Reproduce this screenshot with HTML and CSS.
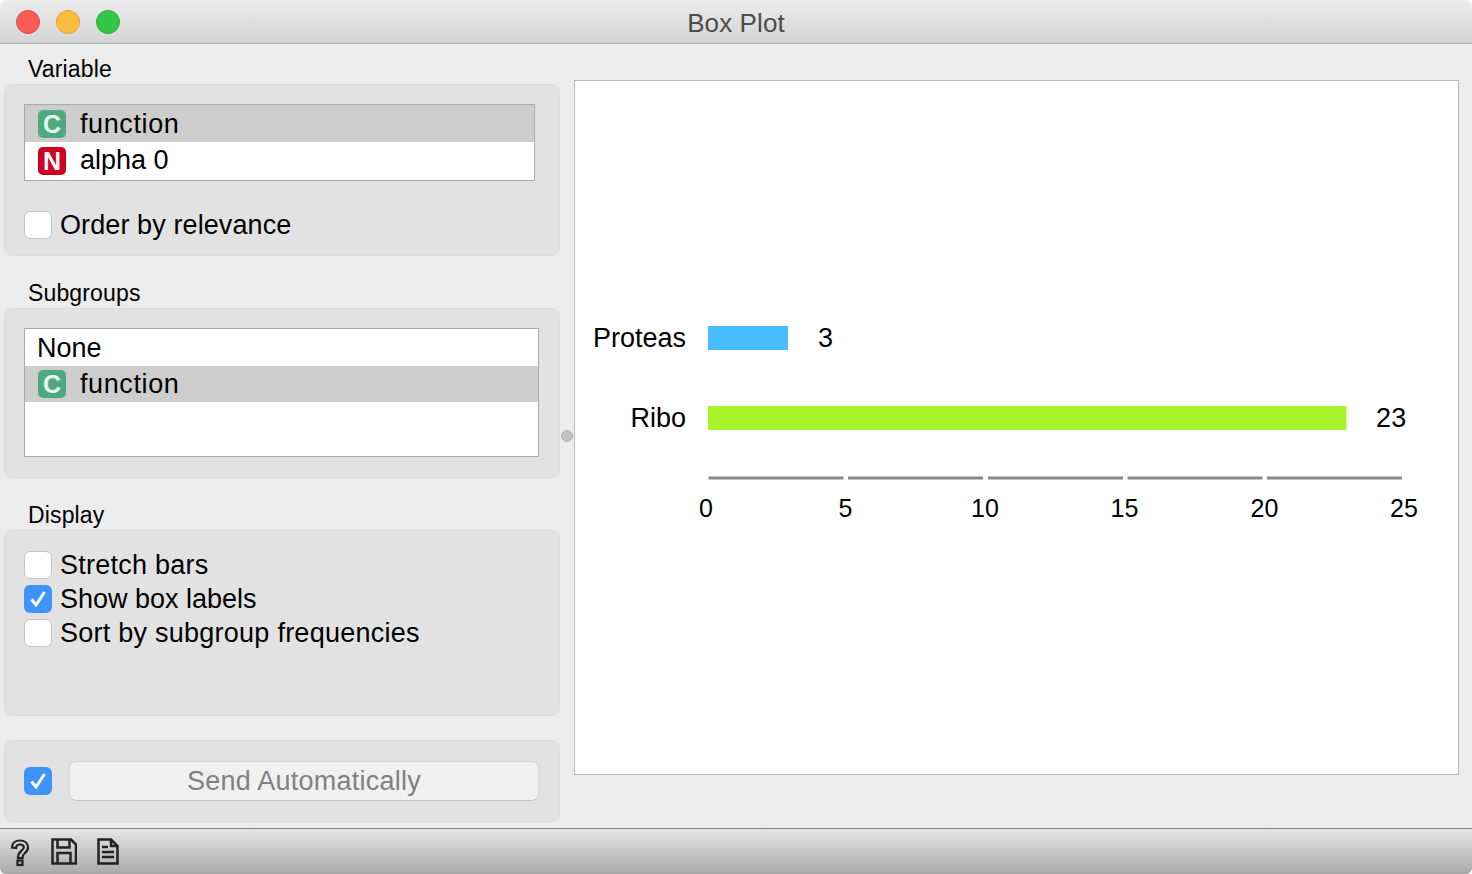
FILE: index.html
```html
<!DOCTYPE html>
<html lang="en">
<head>
    <meta charset="UTF-8">
    <title>Box Plot</title>
    <link rel="stylesheet" href="styles.css">
</head>
<body>
    <div class="window">
        <header class="titlebar">
            <div class="lights">
                <span class="light light-close"></span>
                <span class="light light-min"></span>
                <span class="light light-max"></span>
            </div>
            <div class="title">Box Plot</div>
        </header>

        <main class="main">
            <aside class="controls">
                <section class="group">
                    <div class="group-label">Variable</div>
                    <div class="group-box box-variable">
                        <div class="list list-variable">
                            <div class="row selected"><span class="badge badge-c">C</span><span class="row-text">function</span></div>
                            <div class="row"><span class="badge badge-n">N</span><span class="row-text">alpha 0</span></div>
                        </div>
                        <label class="check check-relevance"><span class="tick"></span>Order by relevance</label>
                    </div>
                </section>

                <section class="group">
                    <div class="group-label">Subgroups</div>
                    <div class="group-box box-subgroups">
                        <div class="list list-subgroups">
                            <div class="row row-plain"><span class="row-text">None</span></div>
                            <div class="row selected"><span class="badge badge-c">C</span><span class="row-text">function</span></div>
                        </div>
                    </div>
                </section>

                <section class="group">
                    <div class="group-label">Display</div>
                    <div class="group-box box-display">
                        <label class="check"><span class="tick"></span>Stretch bars</label>
                        <label class="check check-tight"><span class="tick on"><svg viewBox="0 0 28 28"><path d="M7.5 14.500l4.500 5.500 8.500-13"/></svg></span>Show box labels</label>
                        <label class="check"><span class="tick"></span>Sort by subgroup frequencies</label>
                    </div>
                </section>

                <section class="group-box box-send">
                    <span class="tick on"><svg viewBox="0 0 28 28"><path d="M7.5 14.500l4.500 5.500 8.500-13"/></svg></span>
                    <button class="send" disabled>Send Automatically</button>
                </section>
            </aside>

            <div class="handle"></div>

            <div class="chart">
                <svg class="plot" viewBox="575 81 883 693" width="883" height="693">
                    <text class="name" x="686" y="347">Proteas</text>
                    <rect x="708" y="326" width="80" height="24" fill="#46bdfe"/>
                    <text class="value" x="818" y="347">3</text>

                    <text class="name" x="686" y="427">Ribo</text>
                    <rect x="708" y="406" width="638.500" height="24" fill="#a8f52c"/>
                    <text class="value" x="1376" y="427">23</text>

                    <g fill="#888">
                        <rect x="708.500" y="476.500" width="135" height="3"/>
                        <rect x="848" y="476.500" width="135" height="3"/>
                        <rect x="988" y="476.500" width="135" height="3"/>
                        <rect x="1127.500" y="476.500" width="135" height="3"/>
                        <rect x="1267" y="476.500" width="135" height="3"/>
                    </g>
                    <g class="ticks">
                        <text x="706" y="517">0</text>
                        <text x="845.500" y="517">5</text>
                        <text x="985" y="517">10</text>
                        <text x="1124.500" y="517">15</text>
                        <text x="1264.500" y="517">20</text>
                        <text x="1404" y="517">25</text>
                    </g>
                </svg>
            </div>
        </main>

        <footer class="statusbar">
            <svg class="tool tool-help" viewBox="0 0 22 30">
                <g transform="translate(2 2.500)">
                    <path d="M1 8C1 3.500 4.500 1 9 1s8 2.500 8 7c0 3-1.500 4.500-3.500 6-1.500 1.200-2 2-2 4.500H7c0-3.500.8-5 3-6.800 1.700-1.400 2.800-2.200 2.800-3.900C12.800 6 11.300 5 9 5 6.700 5 5.200 6.200 5.200 8.500Z"/>
                    <rect x="6.500" y="21" width="5" height="4.500"/>
                </g>
            </svg>
            <svg class="tool tool-save" viewBox="0 0 26 27">
                <path d="M1.500 1.500H20L25 6.500V25.500H1.500Z"/>
                <path d="M6.500 1.500V9.500H18.500V1.500"/>
                <path d="M6.500 25.500V15H19.500V25.500"/>
            </svg>
            <svg class="tool tool-doc" viewBox="0 0 22 27">
                <path d="M1.500 1.500H14L20.500 8V25.500H1.500Z"/>
                <path d="M14 1.500V8H20.500"/>
                <path d="M5 9H11M5 14H17M5 19H17"/>
            </svg>
        </footer>
    </div>
</body>
</html>
```

FILE: styles.css
```css
* {
    box-sizing: border-box;
}
html, body {
    margin: 0;
    height: 100%;
    background-color: #fff;
}
body {
    font-family: "Liberation Sans", Arial, sans-serif;
    font-size: 27px;
    color: #000;
}
.window {
    display: flex;
    flex-direction: column;
    height: 874px;
    background-color: #ececec;
    border-radius: 7px 7px 6px 6px;
    overflow: hidden;
}

/* title bar */
.titlebar {
    flex: none;
    display: grid;
    grid-template-columns: 1fr auto 1fr;
    align-items: center;
    height: 44px;
    background: linear-gradient(#ebebeb, #d4d4d4);
    border-bottom: 1px solid #b1b1b1;
}
.lights {
    display: flex;
    gap: 16px;
    padding-left: 16px;
}
.light {
    width: 24px;
    height: 24px;
    border-radius: 50%;
    border: 1px solid;
}
.light-close {
    background-color: #fc5b57;
    border-color: #e5483f;
}
.light-min {
    background-color: #fdbc40;
    border-color: #e1a32d;
}
.light-max {
    background-color: #33c748;
    border-color: #2bac3a;
}
.title {
    padding-top: 3px;
    font-size: 26px;
    letter-spacing: 0.1px;
    color: #4c4c4c;
}

/* main area */
.main {
    flex: 1;
    display: flex;
    position: relative;
    min-height: 0;
}
.controls {
    flex: none;
    width: 560px;
    padding: 10px 0 0 4px;
}
.group {
    margin-bottom: 22px;
}
.group-label {
    height: 30px;
    padding-left: 24px;
    font-size: 23px;
    line-height: 30px;
    letter-spacing: 0.15px;
}
.group-box {
    padding: 19px 20px 0 19px;
    background-color: #e2e2e2;
    border: 1px solid #dcdcdc;
    border-radius: 8px;
}
.box-variable {
    height: 172px;
}
.box-subgroups {
    height: 170px;
}
.box-display {
    height: 186px;
    padding-top: 17px;
}
.box-send {
    display: flex;
    align-items: center;
    gap: 17px;
    height: 82px;
    margin-top: 24px;
    padding: 0 20px 0 19px;
}

/* lists */
.list {
    background-color: #fff;
    border: 1px solid #a9a9a9;
}
.list-variable {
    width: 511px;
    height: 77px;
}
.list-subgroups {
    width: 515px;
    height: 129px;
}
.row {
    display: flex;
    align-items: center;
    height: 37px;
    padding-left: 13px;
}
.row-plain {
    padding-left: 12px;
}
.row:first-child .row-text {
    padding-top: 2px;
}
.row.selected {
    background-color: #cdcdcd;
    letter-spacing: 0.6px;
}
.list-subgroups .row.selected {
    height: 36px;
}
.badge {
    flex: none;
    width: 28px;
    height: 28px;
    margin-right: 14px;
    border-radius: 5px;
    font-size: 25px;
    font-weight: bold;
    line-height: 28px;
    letter-spacing: 0;
    text-align: center;
    color: #fff;
}
.badge-c {
    background-color: #4fa97f;
    color: #e3f6f4;
}
.badge-n {
    background-color: #cf0022;
}

/* checkboxes */
.check {
    display: flex;
    align-items: center;
    height: 34px;
    letter-spacing: 0.25px;
}
.check-relevance {
    margin-top: 27px;
    letter-spacing: 0.1px;
}
.check-tight {
    letter-spacing: 0;
}
.tick {
    flex: none;
    width: 28px;
    height: 28px;
    margin-right: 8px;
    background-color: #fff;
    border: 1px solid #c4c4c4;
    border-radius: 6px;
}
.tick.on {
    background-color: #3f93fb;
    border: none;
}
.tick svg {
    display: block;
}
.tick path {
    fill: none;
    stroke: #fff;
    stroke-width: 3;
}
.box-send .tick {
    margin-right: 0;
}
.send {
    width: 470px;
    height: 40px;
    padding: 0;
    font-family: inherit;
    font-size: 27px;
    letter-spacing: 0.25px;
    color: #808080;
    background-color: #f0f0f0;
    border: 1px solid #d6d6d6;
    border-bottom-color: #c4c4c4;
    border-radius: 7px;
}

/* splitter handle */
.handle {
    position: absolute;
    left: 561px;
    top: 386px;
    width: 12px;
    height: 12px;
    border-radius: 50%;
    background-color: #c2c2c2;
    border: 1px solid #b0b0b0;
}

/* plot */
.chart {
    width: 885px;
    height: 695px;
    margin: 36px 0 0 14px;
    background-color: #fff;
    border: 1px solid #b9b9b9;
}
.plot {
    display: block;
}
.name {
    font-size: 27px;
    text-anchor: end;
}
.value {
    font-size: 27px;
    letter-spacing: 0.3px;
}
.ticks {
    font-size: 25px;
    text-anchor: middle;
}

/* bottom bar */
.statusbar {
    flex: none;
    display: flex;
    align-items: center;
    gap: 20px;
    height: 46px;
    padding-left: 9px;
    background: linear-gradient(#e6e6e6, #a9a9a9);
    border-top: 1px solid #7d7d7d;
}
.tool {
    fill: none;
    stroke: #222;
    stroke-width: 2.500;
}
.tool-help {
    width: 22px;
    height: 30px;
    stroke-width: 2.200;
}
.tool-save {
    width: 26px;
    height: 27px;
}
.tool-doc {
    width: 22px;
    height: 27px;
}
```
